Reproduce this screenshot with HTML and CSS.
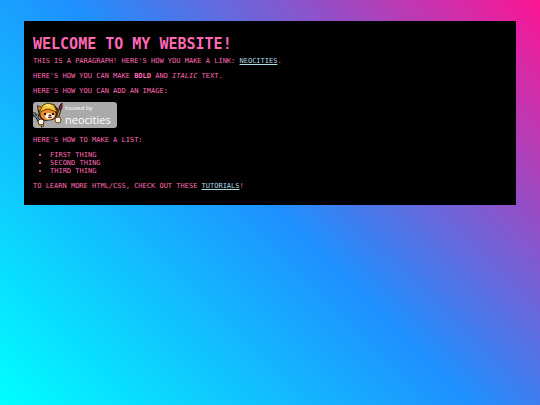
FILE: index.html
```html
<!DOCTYPE html>
<html lang="en">

<head>
    <meta charset="UTF-8">
    <meta name="viewport" content="width=device-width, initial-scale=1.0">
    <title>The web site of my dreams</title>
    <link rel="stylesheet" href="styles.css">
</head>

<body>
    <main class="container">
        <h1>WELCOME TO MY WEBSITE!</h1>

        <p>THIS IS A PARAGRAPH! HERE'S HOW YOU MAKE A LINK: <a href="https://neocities.org">NEOCITIES</a>.</p>

        <p>HERE'S HOW YOU CAN MAKE <strong>BOLD</strong> AND <em>ITALIC</em> TEXT.</p>

        <p>HERE'S HOW YOU CAN ADD AN IMAGE:</p>

        <div class="badge">
            <svg class="cat" viewBox="0 0 30 26" aria-hidden="true">
                <!-- ears and head -->
                <path d="M5 10 4 3l5 2 5-4 7 1 4 5-1 7-4 4-8 1-5-3z" fill="#2b1a10" />
                <path d="M6 9 5 4l4 2zM7 10l5-4 9 2 2 4-2 4-4 2H12l-4-3z" fill="#e98a2b" />
                <path d="m13 12 3-1 4 1 2 2-3 3h-5l-2-2z" fill="#fff3dc" />
                <!-- hard hat -->
                <path d="m8 7 2-4 5-2 6 2 2 5 2 2-4-1-6-2-4 1-5 3z" fill="#f4c52e" stroke="#6b4310" stroke-width="1" />
                <path d="m12 3 4-1 3 2-4 1z" fill="#ffe780" />
                <path d="M11 11h2v2h-2zM19 11h2v2h-2z" fill="#20130c" />
                <path d="M16 13h2v1h-2zM15 15l2 1 2-1" fill="#8b3030" stroke="#5a2818" stroke-width="1" />
                <!-- wrench and paw -->
                <path d="M1 10v3l3 2 1-3M3 14l7 11" fill="none" stroke="#222" stroke-width="3" />
                <path d="M1 10v3l3 2 1-3M3 14l7 11" fill="none" stroke="#969ca0" stroke-width="1" />
                <path d="M5 20h6l-1 4H6z" fill="#e98a2b" />
                <circle cx="8" cy="20" r="3" fill="#fff5df" stroke="#39271a" stroke-width="1" />
                <!-- brush and paw -->
                <path d="m28 4-4 13" stroke="#33251b" stroke-width="3" />
                <path d="m27 7-3 10" stroke="#d5a554" stroke-width="1" />
                <path d="m26 7 1-4 2-2v4l-2 3z" fill="#902638" stroke="#45121c" stroke-width="1" />
                <circle cx="25" cy="18" r="3" fill="#fff0d0" stroke="#67401e" stroke-width="1" />
            </svg>
            <span class="badge-text">
                <span class="hosted">hosted by</span>
                <span class="name">neocities</span>
            </span>
        </div>

        <p>HERE'S HOW TO MAKE A LIST:</p>

        <ul>
            <li>FIRST THING</li>
            <li>SECOND THING</li>
            <li>THIRD THING</li>
        </ul>

        <p>TO LEARN MORE HTML/CSS, CHECK OUT THESE <a href="https://neocities.org/tutorials">TUTORIALS</a>!</p>
    </main>
</body>

</html>
```
FILE: styles.css
```css
* {
    box-sizing: border-box;
    margin: 0;
    padding: 0;
}

body {
    min-height: 100vh;
    padding: 21px 24px;
    font-family: "DejaVu Sans Mono", monospace;
    font-size: 7px;
    line-height: 8px;
    color: hotpink;
    background: linear-gradient(45deg, aqua, dodgerblue, deeppink);
}

.container {
    padding: 15px 9px 8px;
    background-color: black;
}

h1 {
    margin-bottom: 5px;
    font-size: 15px;
    line-height: 16px;
}

p {
    margin-bottom: 7px;
}

a {
    color: lightblue;
}

ul {
    margin-bottom: 7px;
    padding-left: 17px;
}

.badge {
    display: flex;
    align-items: center;
    gap: 2px;
    width: fit-content;
    height: 26px;
    margin-bottom: 8px;
    padding-right: 6px;
    border-radius: 3px;
    background-color: #aaa;
}

.cat {
    width: 30px;
    height: 26px;
}

.badge-text {
    display: flex;
    flex-direction: column;
    font-family: "Open Sans", sans-serif;
    color: white;
}

.hosted {
    font-size: 6px;
    line-height: 8px;
}

.name {
    font-size: 11px;
    line-height: 15px;
}
```
